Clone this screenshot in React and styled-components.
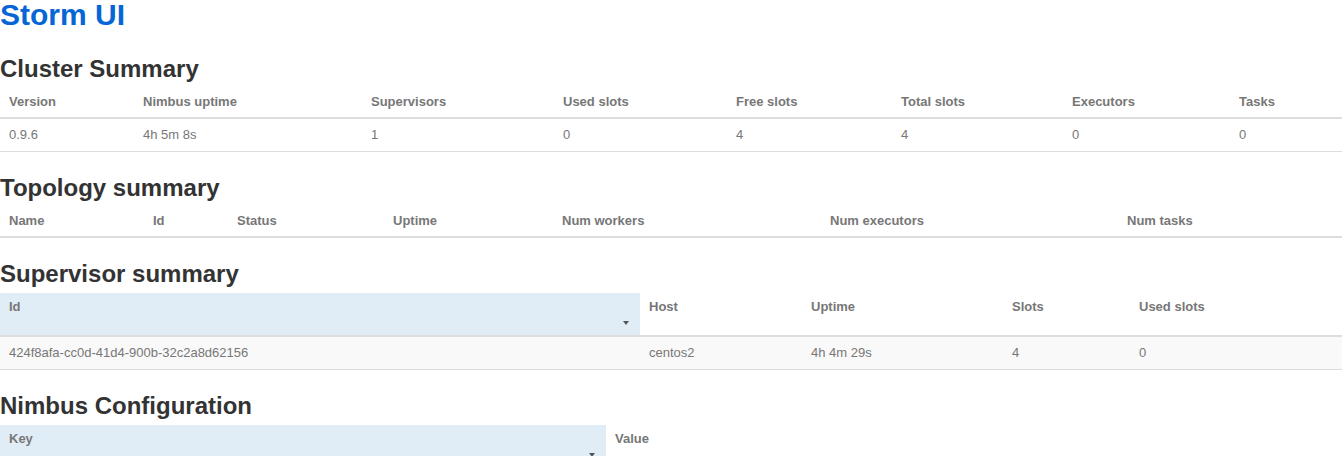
import React from 'react';
import styled, { createGlobalStyle } from 'styled-components';

const GlobalStyle = createGlobalStyle`
  html, body {
    margin: 0;
    padding: 0;
    background: #fff;
  }
  body {
    font-family: "Liberation Sans", Arial, Helvetica, sans-serif;
    font-size: 13px;
    color: #777;
  }
`;

const cluster = {
  cols: [134, 228, 192, 173, 165, 171, 167, null],
  head: ['Version', 'Nimbus uptime', 'Supervisors', 'Used slots', 'Free slots', 'Total slots', 'Executors', 'Tasks'],
  rows: [['0.9.6', '4h 5m 8s', '1', '0', '4', '4', '0', '0']],
};

const topology = {
  cols: [144, 84, 156, 169, 268, 297, null],
  head: ['Name', 'Id', 'Status', 'Uptime', 'Num workers', 'Num executors', 'Num tasks'],
  rows: [],
};

const supervisors = {
  cols: [640, 162, 201, 127, null],
  head: ['Id', 'Host', 'Uptime', 'Slots', 'Used slots'],
  sorted: 0,
  striped: true,
  rows: [['424f8afa-cc0d-41d4-900b-32c2a8d62156', 'centos2', '4h 4m 29s', '4', '0']],
};

const nimbusConf = {
  cols: [606, null],
  head: ['Key', 'Value'],
  sorted: 0,
  striped: true,
  rows: [],
};

const SummaryTable = ({ data }) => (
  <Table>
    <colgroup>
      {data.cols.map((w, i) => (
        <Col key={i} $w={w} />
      ))}
    </colgroup>
    <thead>
      <tr>
        {data.head.map((h, i) => (
          <Th key={h} $sorted={data.sorted === i}>
            {h}
          </Th>
        ))}
      </tr>
    </thead>
    <tbody>
      {data.rows.map((row, r) => (
        <Tr key={r} $striped={data.striped}>
          {row.map((cell, i) => (
            <Td key={i}>{cell}</Td>
          ))}
        </Tr>
      ))}
    </tbody>
  </Table>
);

const App = () => (
  <Page>
    <GlobalStyle />
    <Title>Storm UI</Title>
    <Heading>Cluster Summary</Heading>
    <SummaryTable data={cluster} />
    <Heading>Topology summary</Heading>
    <SummaryTable data={topology} />
    <Heading>Supervisor summary</Heading>
    <SummaryTable data={supervisors} />
    <Heading>Nimbus Configuration</Heading>
    <SummaryTable data={nimbusConf} />
  </Page>
);

const Page = styled.div`
  width: 1342px;
  font-family: "Liberation Sans", Arial, Helvetica, sans-serif;
`;

// bottom margin collapses with the first heading's top margin
const Title = styled.h1`
  margin: 0 0 27px;
  font-size: 30px;
  line-height: 29px;
  font-weight: bold;
  color: #0666d6;
`;

const Heading = styled.h2`
  margin: 23px 0 6px;
  font-size: 24px;
  line-height: 26px;
  font-weight: bold;
  color: #333;
`;

const Table = styled.table`
  width: 100%;
  table-layout: fixed;
  border-collapse: separate;
  border-spacing: 0;
  font-size: 13px;
  line-height: 19px;
`;

const Col = styled.col`
  width: ${(p) => (p.$w ? `${p.$w}px` : 'auto')};
`;

const Th = styled.th`
  position: relative;
  text-align: left;
  vertical-align: top;
  font-weight: bold;
  color: #777;
  padding: 4px 9px ${(p) => (p.$sorted ? '19px' : '6px')};
  background: ${(p) => (p.$sorted ? '#e1edf6' : 'transparent')};
  border-bottom: 2px solid #ddd;

  &::after {
    content: '';
    display: ${(p) => (p.$sorted ? 'block' : 'none')};
    position: absolute;
    right: 11px;
    bottom: 10px;
    border-left: 3px solid transparent;
    border-right: 3px solid transparent;
    border-top: 4px solid #555;
  }
`;

const Tr = styled.tr`
  background: ${(p) => (p.$striped ? '#f9f9f9' : '#fff')};
`;

const Td = styled.td`
  padding: 6px 9px 7px;
  color: #777;
  border-bottom: 1px solid #ddd;
  white-space: nowrap;
`;

export default App;
